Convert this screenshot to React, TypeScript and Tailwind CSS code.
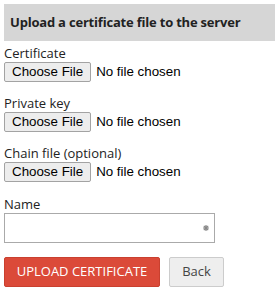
import React from 'react';

const FileRow = ({ label }: { label: string }) => (
  <div className="flex flex-col">
    <label className="text-[13px] leading-[17px] text-[#222]">{label}</label>
    <input
      type="file"
      className="h-[20px] text-[13.33px] leading-[16px] text-black file:mr-[5px] file:h-[20px] file:px-[7px] file:bg-[#ededed] file:border file:border-solid file:border-[#a3a3a3] file:rounded-[2px] file:text-black"
      style={{ fontFamily: '"Liberation Sans", Arial, sans-serif' }}
    />
  </div>
);

export default function App() {
  return (
    <div className="w-[275px] h-[302px] bg-white pl-1 pt-1" style={{ fontFamily: '"Open Sans", "DejaVu Sans", sans-serif' }}>
      <div className="h-[37px] bg-[#d6d6d6] flex items-center pl-[6px]">
        <h2 className="text-[13px] font-bold text-[#222] tracking-[-0.2px]">Upload a certificate file to the server</h2>
      </div>
      <div className="mt-[4px] flex flex-col gap-[13px]">
        <FileRow label="Certificate" />
        <FileRow label="Private key" />
        <FileRow label="Chain file (optional)" />
      </div>
      <div className="mt-[14px] flex flex-col">
        <label className="text-[13px] leading-[17px] text-[#222]">Name</label>
        <div className="relative w-[211px] h-[30px] border border-[#aaa] bg-white">
          <input type="text" className="w-full h-full px-2 outline-none text-[13px]" />
          <svg className="absolute right-[5px] top-[11px]" width="6" height="6" viewBox="0 0 6 6">
            <path d="M3 0V6M0 3H6M0.8 0.8L5.2 5.2M5.2 0.8L0.8 5.2" stroke="#888" strokeWidth="1.2" />
          </svg>
        </div>
      </div>
      <div className="mt-[14px] flex gap-[9px]">
        <button className="w-[156px] h-[30px] bg-[#db4a39] border border-[#c9402f] rounded-[2px] text-white text-[13px]">
          UPLOAD CERTIFICATE
        </button>
        <button className="w-[55px] h-[30px] bg-[#eeeeee] border border-[#cccccc] rounded-[2px] text-[#444] text-[13px]">
          Back
        </button>
      </div>
    </div>
  );
}
